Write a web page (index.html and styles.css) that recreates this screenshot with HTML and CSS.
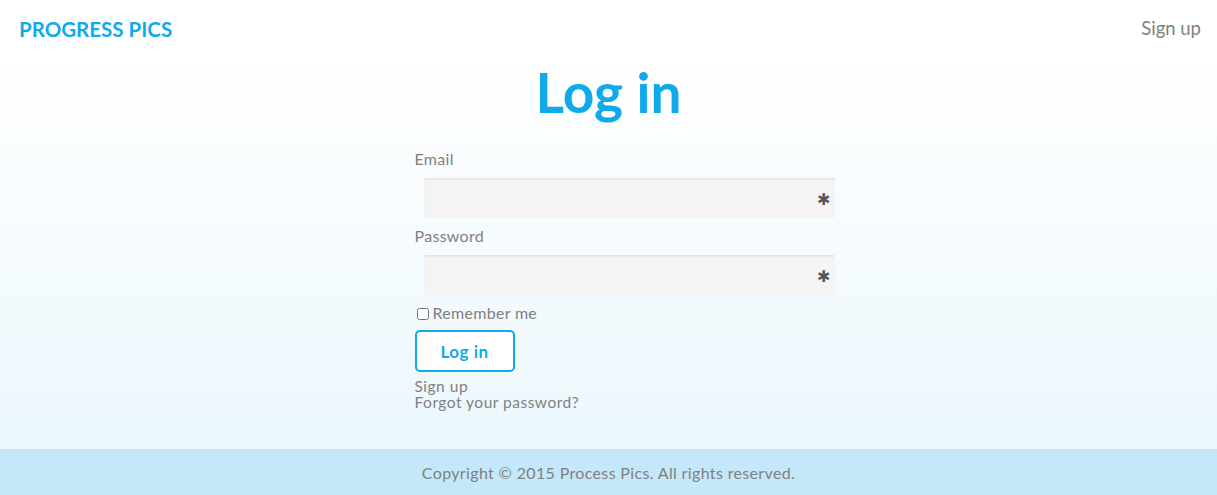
FILE: index.html
```html
<!DOCTYPE html>
<html>
<head>
<meta charset="utf-8">
<link rel="stylesheet" href="styles.css">
</head>
<body>
<div class="page">
  <header class="topbar">
    <a class="brand" href="#">PROGRESS PICS</a>
    <a class="nav-link" href="#">Sign up</a>
  </header>
  <main class="content">
    <h1 class="title">Log in</h1>
    <form class="form">
      <label class="label">Email</label>
      <div class="field"><input class="input" type="email"><span class="req">✱</span></div>
      <label class="label">Password</label>
      <div class="field"><input class="input" type="password"><span class="req">✱</span></div>
      <label class="remember"><input class="check" type="checkbox">Remember me</label>
      <button class="btn" type="button">Log in</button>
      <div class="links">
        <a href="#">Sign up</a>
        <a href="#">Forgot your password?</a>
      </div>
    </form>
  </main>
  <footer class="footer">Copyright © 2015 Process Pics. All rights reserved.</footer>
</div>
</body>
</html>
```
FILE: styles.css
```css
* { box-sizing: border-box; }
html, body { margin: 0; padding: 0; }
body {
  font-family: Lato, "Noto Sans", sans-serif;
  color: #808080;
  background: #fff;
}
a { text-decoration: none; }
.page {
  min-height: 495px;
  display: flex;
  flex-direction: column;
}
.topbar {
  height: 57px;
  display: flex;
  justify-content: space-between;
  align-items: flex-start;
  padding: 16px 16px 0 19px;
}
.brand {
  color: #10aaeb;
  font-weight: 700;
  font-size: 20.5px;
  line-height: 26px;
}
.nav-link {
  color: #808080;
  font-size: 18.5px;
  line-height: 24px;
}
.content {
  flex: 1;
  background: linear-gradient(#ffffff, #ebf7fd);
  display: flex;
  flex-direction: column;
  align-items: center;
  padding-bottom: 37px;
}
.title {
  margin: 5px 0 0;
  color: #10aaeb;
  font-size: 55px;
  font-weight: 700;
  line-height: 60px;
}
.form {
  width: 420px;
  margin-left: 32px;
  display: flex;
  flex-direction: column;
  margin-top: 28px;
}
.label {
  font-size: 16px;
  letter-spacing: 0.3px;
  line-height: 18px;
  color: #808080;
}
.field {
  position: relative;
  margin: 10px 0 9px 9px;
  height: 40px;
}
.input {
  width: 100%;
  height: 40px;
  border: none;
  border-top: 1px solid #e4e4e4;
  border-radius: 2px;
  background: #f4f4f4;
  box-shadow: inset 0 1px 2px rgba(0,0,0,0.05);
  outline: none;
}
.req {
  position: absolute;
  right: 5px;
  top: 13px;
  font-size: 16px;
  line-height: 16px;
  color: #555;
}
.remember {
  display: flex;
  align-items: center;
  font-size: 16px;
  letter-spacing: 0.3px;
  line-height: 18px;
}
.check {
  margin: 2px 4px 0 2px;
  width: 12px;
  height: 12px;
}
.btn {
  margin-top: 8px;
  width: 100px;
  height: 42px;
  border: 2px solid #10aaeb;
  border-radius: 5px;
  background: #fff;
  color: #10aaeb;
  font-family: inherit;
  font-weight: 700;
  font-size: 17px;
  letter-spacing: 0.5px;
  cursor: pointer;
}
.links {
  display: flex;
  flex-direction: column;
  margin-top: 6px;
}
.links a {
  color: #808080;
  font-size: 15.5px;
  letter-spacing: 0.5px;
  line-height: 16px;
}
.footer {
  height: 46px;
  background: #c4e8fa;
  color: #808080;
  font-size: 16px;
  letter-spacing: 0.35px;
  display: flex;
  align-items: center;
  justify-content: center;
}
```
